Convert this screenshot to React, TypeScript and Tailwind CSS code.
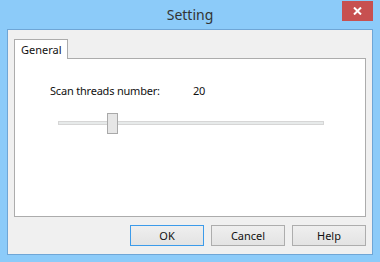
import React from "react";

const font = { fontFamily: '"Noto Sans", "Open Sans", sans-serif' };

function DlgButton({ label, primary }: { label: string; primary?: boolean }) {
  return (
    <button
      className={`w-[74px] h-[21px] text-[11px] leading-none text-[#111] bg-gradient-to-b from-[#efefef] to-[#e3e3e3] border ${
        primary ? "border-[#3c9bea]" : "border-[#adadad]"
      }`}
    >
      {label}
    </button>
  );
}

export default function App() {
  return (
    <div className="w-[380px] h-[262px] bg-[#8ccbf9] flex flex-col" style={font}>
      {/* title bar */}
      <div className="h-[29px] grid grid-cols-[1fr_auto_1fr]">
        <div />
        <div className="text-[14px] text-[#333] pt-[4px]">Setting</div>
        <div className="flex justify-end pr-[7px] pt-[1px]">
          <div className="w-[31px] h-[20px] bg-[#c75050] flex items-center justify-center">
            <svg width="9" height="8" viewBox="0 0 9 8">
              <path d="M1 0.5 L8 7.5 M8 0.5 L1 7.5" stroke="white" strokeWidth="2" />
            </svg>
          </div>
        </div>
      </div>

      {/* client area */}
      <div className="mx-[7px] h-[226px] border border-[#6fa6d6] bg-[#f0f0f0] flex flex-col pl-[6px] pr-[6px] pt-[9px]">
        <div className="flex">
          <div className="w-[54px] h-[20px] bg-white border border-b-0 border-[#acacac] text-[11px] text-[#111] pl-[6px] pt-[2px] -mb-px relative">
            General
          </div>
        </div>
        <div className="h-[159px] bg-white border border-[#acacac] pl-[35px] pt-[24px]">
          <div className="flex items-center text-[11px] tracking-[-0.2px] text-[#111]">
            <span className="w-[143px]">Scan threads number:</span>
            <span>20</span>
          </div>
          <div className="mt-[13px] ml-[8px] w-[266px] h-[21px] flex items-center">
            <div className="w-[49px] h-[4px] bg-[#e7eaea] border border-[#d6d6d6] border-r-0" />
            <div className="w-[11px] h-[21px] bg-[#e6e6e6] border border-[#a9a9a9]" />
            <div className="flex-1 h-[4px] bg-[#e7eaea] border border-[#d6d6d6] border-l-0" />
          </div>
        </div>
        <div className="flex justify-end gap-[7px] mt-[8px]">
          <DlgButton label="OK" primary />
          <DlgButton label="Cancel" />
          <DlgButton label="Help" />
        </div>
      </div>
    </div>
  );
}
